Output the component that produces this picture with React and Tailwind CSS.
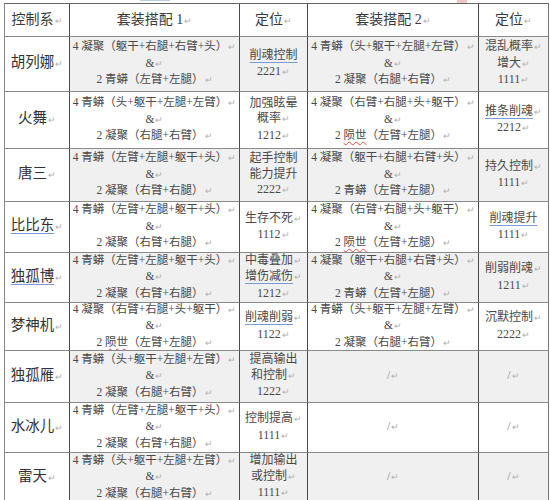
import React from 'react'

const FONT = { fontFamily: '"Liberation Serif", "Noto Sans CJK SC", serif' }
const COLS = 'grid grid-cols-[65px_170px_68px_171px_70px]'

// "~" prefix = blue grammar underline, trailing "¶" = paragraph mark
const rows = [
  {
    name: '胡列娜', h: 'h-[55px]', shade: true,
    s1: ['4 凝聚（躯干+右腿+右臂+头）', '2 青蟒（左臂+左腿）'],
    p1: ['~削魂控制', '2221¶'],
    s2: ['4 青蟒（头+躯干+左腿+左臂）', '2 凝聚（右腿+右臂）'],
    p2: ['混乱概率¶', '增大¶', '1111¶'],
  },
  {
    name: '火舞', h: 'h-[57px]',
    s1: ['4 青蟒（头+躯干+左腿+左臂）', '2 凝聚（右腿+右臂）'],
    p1: ['加强眩晕', '概率¶', '1212¶'],
    s2: ['4 凝聚（右臂+右腿+头+躯干）', '2 陨世（左臂+左腿）'],
    p2: ['~推条削魂¶', '2212¶'],
  },
  {
    name: '唐三', h: 'h-[53px]', shade: true,
    s1: ['4 青蟒（左臂+左腿+躯干+头）', '2 凝聚（右臂+右腿）'],
    p1: ['起手控制', '能力提升', '2222¶'],
    s2: ['4 凝聚（躯干+右腿+右臂+头）', '2 青蟒（左臂+左腿）'],
    p2: ['持久控制¶', '1111¶'],
  },
  {
    name: '~比比东', h: 'h-[51px]',
    s1: ['4 青蟒（左臂+左腿+躯干+头）', '2 凝聚（右臂+右腿）'],
    p1: ['生存不死¶', '1112¶'],
    s2: ['4 凝聚（右臂+右腿+头+躯干）', '2 陨世（左臂+左腿）'],
    p2: ['~削魂提升', '1111¶'],
  },
  {
    name: '~独孤博', h: 'h-[50px]', shade: true,
    s1: ['4 青蟒（左臂+左腿+躯干+头）', '2 凝聚（右臂+右腿）'],
    p1: ['中毒叠加¶', '~增伤减伤¶', '1212¶'],
    s2: ['4 凝聚（躯干+右腿+右臂+头）', '2 青蟒（左臂+左腿）'],
    p2: ['削弱削魂¶', '1211¶'],
  },
  {
    name: '梦神机', h: 'h-[48px]',
    s1: ['4 凝聚（右臂+右腿+头+躯干）', '2 陨世（左臂+左腿）'],
    p1: ['~削魂削弱¶', '1122¶'],
    s2: ['4 青蟒（头+躯干+左腿+左臂）', '2 凝聚（右腿+右臂）'],
    p2: ['沉默控制¶', '2222¶'],
  },
  {
    name: '独孤雁', h: 'h-[52px]', shade: true,
    s1: ['4 青蟒（头+躯干+左腿+左臂）', '2 凝聚（右腿+右臂）'],
    p1: ['提高输出', '和控制¶', '1222¶'],
    s2: null,
    p2: ['/¶'],
  },
  {
    name: '水冰儿', h: 'h-[50px]',
    s1: ['4 青蟒（左臂+左腿+躯干+头）', '2 凝聚（右臂+右腿）'],
    p1: ['控制提高¶', '1111¶'],
    s2: null,
    p2: ['/¶'],
  },
  {
    name: '雷天', h: 'h-[50px]', shade: true,
    s1: ['4 青蟒（头+躯干+左腿+左臂）', '2 凝聚（右腿+右臂）'],
    p1: ['增加输出', '或控制¶', '1111¶'],
    s2: null,
    p2: ['/¶'],
  },
]

const Mark = () => <span className="ml-[1px] text-[9px] text-[#b0b0b0]">↵</span>

const Line = ({ raw }) => {
  let text = raw
  let under = false
  let mark = false
  if (text.startsWith('~')) { under = true; text = text.slice(1) }
  if (text.endsWith('¶')) { mark = true; text = text.slice(0, -1) }
  let body = text
  if (text.includes('陨世')) {
    const [a, b] = text.split('陨世')
    body = (
      <>
        {a}
        <span className="underline decoration-wavy decoration-[#e05050] decoration-1 underline-offset-2">陨世</span>
        {b}
      </>
    )
  }
  return (
    <div className="whitespace-nowrap">
      <span className={under ? 'underline decoration-[#7a9ad8] decoration-1 underline-offset-[3px]' : ''}>{body}</span>
      {mark && <Mark />}
    </div>
  )
}

const Cell = ({ lines, shade, last, className = '' }) => (
  <div
    className={`flex flex-col items-center justify-center overflow-hidden border-b border-b-[#8a8a8a] ${last ? 'border-r border-r-[#777]' : 'border-r border-r-[#4a4a4a]'} ${shade ? 'bg-[#f0f0f0]' : 'bg-white'} ${className}`}
  >
    {lines.map((l, i) => <Line key={i} raw={l} />)}
  </div>
)

const setLines = (s) => (s ? [s[0] + '¶', '&¶', s[1] + '¶'] : ['/¶'])

export default function App() {
  return (
    <div className="h-[500px] w-[550px] overflow-hidden bg-white" style={FONT}>
      <div className="flex h-[3px]">
        <div className="w-[140px]" />
        <div className="h-[1px] w-[30px] bg-[#b9cde6]" />
        <div className="w-[287px]" />
        <div className="h-[3px] w-[10px] bg-[#f3c4c4]" />
      </div>
      <div className="ml-[4px] w-[545px] border-l border-t border-l-[#888] border-t-[#666]">
        <div className={`${COLS} h-[33px] text-[14px] leading-[16px] text-[#3a3a3a]`}>
          <Cell lines={['控制系¶']} />
          <Cell lines={['套装搭配 1¶']} />
          <Cell lines={['定位¶']} />
          <Cell lines={['套装搭配 2¶']} />
          <Cell lines={['定位¶']} last />
        </div>
        {rows.map((r) => (
          <div key={r.name} className={`${COLS} ${r.h} text-[11.5px] leading-[15.5px] text-[#4a4a4a]`}>
            <Cell lines={[r.name + '¶']} className="text-[14.5px] text-[#333]" />
            <Cell lines={setLines(r.s1)} shade={r.shade} />
            <Cell lines={r.p1} shade={r.shade} className="text-[12px]" />
            <Cell lines={setLines(r.s2)} shade={r.shade} className={r.s2 ? '' : 'text-[#888]'} />
            <Cell lines={r.p2} shade={r.shade} last className={`text-[12px] ${r.s2 ? '' : 'text-[#888]'}`} />
          </div>
        ))}
      </div>
    </div>
  )
}
